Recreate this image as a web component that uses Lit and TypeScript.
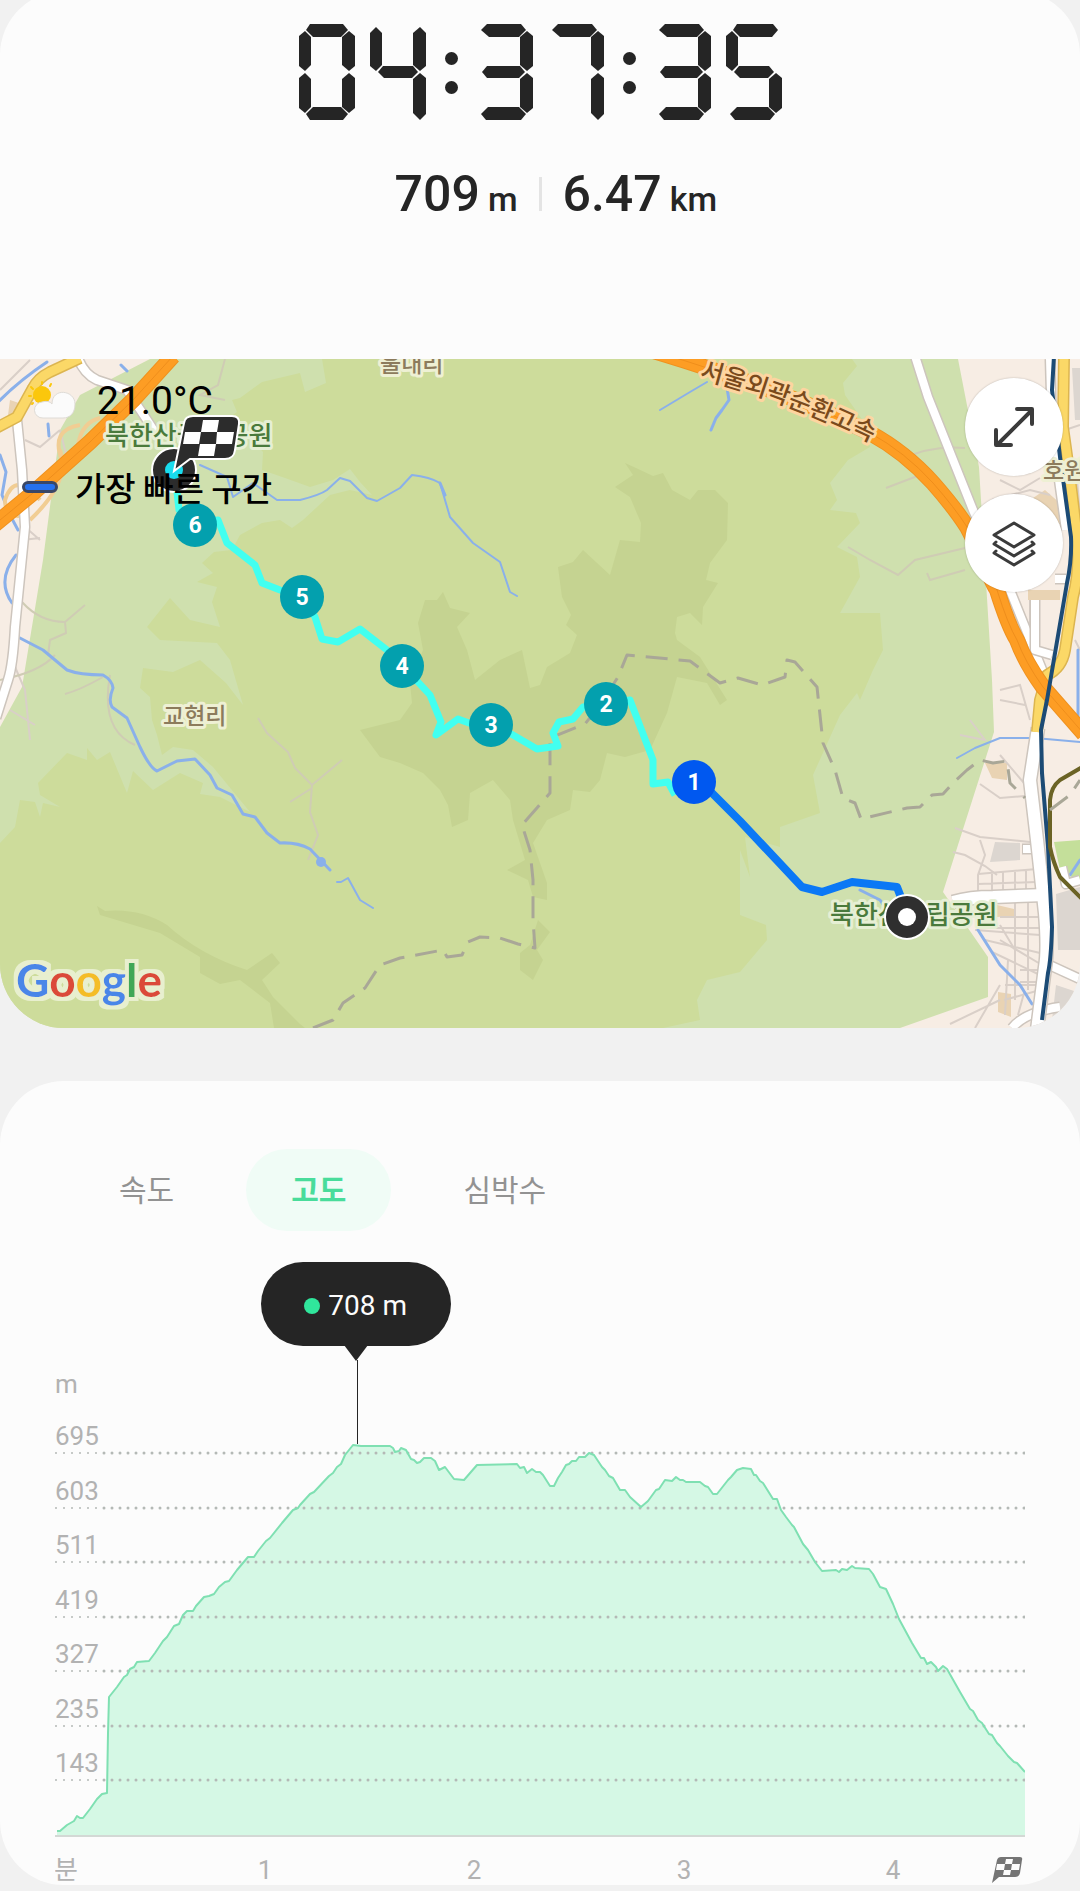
import { LitElement, html, svg, css } from "lit";
import { customElement, property, state } from "lit/decorators.js";
import { classMap } from "lit/directives/class-map.js";

/* Bars of one clock digit in a 56 x 96 cell. Capitals are the regular bars,
   the suffixed ones have free ends that are drawn sharper. */
const BARS: Record<string, string> = {
  a: "7,6 11,0 44,0 49,6 42,13 14,13",
  aLeft: "4,6 10,0 44,0 49,6 42,13 12,13",
  aRight: "7,6 11,0 47,0 52,6 46,13 14,13",
  b: "50,7 56,12 56,42 50,47 43,41 43,13",
  bTop: "50,3 56,9 56,42 50,47 43,41 43,9",
  c: "50,49 56,54 56,84 50,89 43,83 43,55",
  cEnd: "50,49 56,54 56,90 50,96 43,89 43,55",
  d: "7,90 14,83 42,83 49,90 44,96 11,96",
  dLeft: "4,90 11,83 42,83 49,90 44,96 9,96",
  e: "6,49 12,55 12,83 6,89 0,84 0,54",
  f: "6,7 12,13 12,41 6,47 0,42 0,12",
  fTop: "6,3 12,9 12,41 6,47 0,42 0,9",
  g: "8,48 13,42 43,42 48,48 42,54 14,54",
  gLeft: "5,48 10,42 43,42 48,48 42,54 10,54",
};

const DIGITS: Record<string, string[]> = {
  "0": ["a", "b", "c", "d", "e", "f"],
  "3": ["aLeft", "b", "gLeft", "c", "dLeft"],
  "4": ["fTop", "bTop", "g", "cEnd"],
  "5": ["aRight", "f", "g", "c", "dLeft"],
  "7": ["aLeft", "b", "cEnd"],
};

@customElement("segment-clock")
class SegmentClock extends LitElement {
  @property() value = "";

  static styles = css`
    :host { display: block; }
    .clock { display: flex; justify-content: center; align-items: center; gap: 19px; }
    .pair { display: flex; gap: 15px; }
    .digit { width: 56px; height: 96px; fill: #252525; display: block; }
    .colon { display: flex; flex-direction: column; gap: 16px; padding-top: 2px; }
    .dot { width: 13px; height: 13px; border-radius: 50%; background: #252525; }
  `;

  render() {
    const pairs = this.value.split(":");
    return html`<div class="clock" role="img" aria-label=${this.value}>
      ${pairs.map(
        (pair, i) => html`
          ${i > 0 ? html`<div class="colon"><span class="dot"></span><span class="dot"></span></div>` : ""}
          <div class="pair">
            ${[...pair].map(
              (n) => html`<svg class="digit" viewBox="0 0 56 96" aria-hidden="true">
                ${DIGITS[n].map((bar) => svg`<polygon points=${BARS[bar]}></polygon>`)}
              </svg>`
            )}
          </div>
        `
      )}
    </div>`;
  }
}

const MARKS = [
  { n: 6, x: 195, y: 525 },
  { n: 5, x: 302, y: 597 },
  { n: 4, x: 402, y: 666 },
  { n: 3, x: 491, y: 725 },
  { n: 2, x: 606, y: 704 },
  { n: 1, x: 694, y: 782 },
];

@customElement("route-map")
class RouteMap extends LitElement {
  static styles = css`
    :host { display: block; }
    .map { position: relative; overflow: hidden; border-radius: 0 0 64px 64px; background: #f7ede4; }
    .canvas { display: block; width: 100%; height: auto; font-family: Roboto, "Noto Sans CJK KR", sans-serif; }
    .town { fill: none; stroke: #d9cfc8; stroke-width: 2; }
    .trail { fill: none; stroke: #cfccb4; stroke-width: 2; }
    .stream { fill: none; stroke: #8ab0ea; stroke-width: 3; stroke-linejoin: round; stroke-linecap: round; }
    .thin { stroke-width: 2; }
    .case { fill: none; stroke: #cdc5bd; stroke-width: 11; stroke-linejoin: round; }
    .road { fill: none; stroke: #fff; stroke-width: 8; stroke-linejoin: round; }
    .wide-case { stroke-width: 15; }
    .wide { stroke-width: 12; }
    .yellow-case { fill: none; stroke: #dcb550; stroke-width: 12; stroke-linejoin: round; }
    .yellow { fill: none; stroke: #fbd867; stroke-width: 9; stroke-linejoin: round; }
    .ramp { fill: none; stroke: #f1cd93; stroke-width: 4; }
    .highway-case { fill: none; stroke: #ef921f; stroke-width: 16; stroke-linejoin: round; }
    .highway { fill: none; stroke: #fd9d24; stroke-width: 14; stroke-linejoin: round; }
    .median { fill: none; stroke: #ef8e1c; stroke-width: 1; }
    .rail { fill: none; stroke: #1c4b75; stroke-width: 4; stroke-linejoin: round; }
    .olive { fill: none; stroke: #6b6325; stroke-width: 4; stroke-linejoin: round; }
    .border { fill: none; stroke: #a9a797; stroke-width: 3; stroke-dasharray: 22 11; stroke-linejoin: round; }
    .label { font-family: "Noto Sans CJK KR", sans-serif; font-weight: 500; paint-order: stroke; stroke-linejoin: round; stroke-width: 6; }
    .park { font-size: 26px; fill: #4a7a3c; stroke: #e6efd4; }
    .place { font-size: 23px; fill: #8c7b5c; stroke: #eef0d4; }
    .highway-name { font-size: 25px; fill: #7a4a1c; stroke: #fdd5a0; }
    .walk { fill: none; stroke: #42fff0; stroke-width: 7; stroke-linejoin: round; }
    .fast { fill: none; stroke: #0b78f5; stroke-width: 8; stroke-linejoin: round; }
    .mark { fill: #03a0ae; }
    .mark-fast { fill: #0058f0; }
    .mark-text { fill: #fff; font-size: 23px; font-weight: 700; text-anchor: middle; }
    .google { font-family: Lato, sans-serif; font-size: 46px; font-weight: 700; filter: url(#halo); }
    .weather { position: absolute; left: 28px; top: 20px; display: flex; align-items: center; gap: 19px; font: 400 39px/44px Roboto, sans-serif; color: #000; }
    .weather-icon { width: 50px; height: 44px; }
    .legend { position: absolute; left: 22px; top: 106px; display: flex; align-items: center; gap: 17px; font: 500 33px/44px "Noto Sans CJK KR", sans-serif; color: #000; }
    .swatch { width: 36px; height: 12px; box-sizing: border-box; border: 3px solid #3a4766; border-radius: 6px; background: #2671ee; }
    .actions { position: absolute; right: 17px; top: 19px; display: flex; flex-direction: column; gap: 18px; }
    .action { width: 98px; height: 98px; padding: 0; border: 0; border-radius: 50%; background: #fff; display: grid; place-items: center; box-shadow: 0 0 2px rgba(0, 0, 0, 0.25); cursor: pointer; }
    .action-icon { width: 48px; height: 48px; fill: none; stroke: #3b3b3b; stroke-width: 4; stroke-linecap: round; stroke-linejoin: round; }
    .layers { stroke-width: 3; }
  `;

  render() {
    const left = "M173,356 L133,400 L90,442 L33,493 L-6,525";
    const right = "M650,350 Q790,392 870,433 Q905,452 933,483 Q955,508 967,527 C985,560 990,580 997,590 Q1008,625 1017,640 Q1025,662 1043,687 L1084,734";
    const yellowR = "M1064,356 L1063,427 Q1072,490 1077,537 Q1080,570 1073,597 L1065,650 Q1062,668 1047,675 L1040,700 L1037,732";
    const yellowL = "M-4,428 L17,417 L33,388 Q38,378 50,372 L80,358";
    const whiteR = "M915,356 L928,397 L973,510 L1010,590 L1043,672";
    const main = "M1038,728 L1030,780 L1037,840 L1045,913 Q1048,950 1045,967 L1037,1030";
    const west = "M17,420 L22,470 L25,527 L15,627 Q13,665 8,680 L-4,718";
    const cross = "M953,902 Q970,897 993,897 L1045,895";
    const north = "M78,358 Q84,374 97,380 L127,390 L147,420 L160,440";
    return html`<section class="map" aria-label="북한산국립공원">
      <svg class="canvas" viewBox="0 359 1080 669" aria-hidden="true">
        <defs>
          <filter id="halo" x="-10%" y="-20%" width="120%" height="140%">
            <feMorphology in="SourceAlpha" operator="dilate" radius="4" result="grown"></feMorphology>
            <feFlood flood-color="#e8efcf"></feFlood>
            <feComposite in2="grown" operator="in" result="rim"></feComposite>
            <feMerge><feMergeNode in="rim"></feMergeNode><feMergeNode in="SourceGraphic"></feMergeNode></feMerge>
          </filter>
        </defs>
        <path fill="#cfe0ae" d="M150,359 L80,395 L60,430 L43,560 L22,687 L0,727 V1028 H900 L988,997 V957 L943,892 L994,732 L992,680 L979,467 L958,359Z"></path>
        <path fill="#cddc9b" d="M322,359 L326,383 L305,392 L300,373 L262,382 L240,398 L232,400 L237,412 L230,417 L247,425 L257,420 L252,440 L263,452 L262,470 L285,478 L310,487 L333,480 L350,469 L360,482 L372,495 L350,490 L330,495 L303,520 L292,528 L280,520 L262,523 L240,535 L232,550 L214,552 L202,563 L213,573 L197,582 L217,587 L212,602 L220,627 L190,620 L170,598 L147,627 L160,640 L217,643 L230,660 L243,705 L226,683 L200,660 L173,672 L143,668 L140,688 L150,697 L152,720 L157,735 L162,755 L173,747 L193,750 L213,767 L250,812 L220,797 L200,794 L203,783 L180,773 L153,790 L133,771 L127,793 L110,752 L97,760 L87,748 L87,760 L67,753 L38,783 L40,795 L60,807 L43,803 L40,817 L35,802 L20,800 L15,827 L0,843 V1028 H663 L700,1020 L697,1000 L707,980 L740,972 L767,940 L766,925 L740,915 V880 L740,850 L750,877 L745,837 L780,847 L780,827 L820,813 L813,775 L840,715 L857,693 L860,700 L873,670 L883,650 L880,613 L840,613 L860,577 L857,557 L837,547 L860,523 L856,513 L830,510 L837,500 L830,483 L848,460 L870,447 L866,425 L845,395 L843,383 L857,366 L852,359Z"></path>
        <path fill="#c5d391" d="M625,463 L636,468 L653,476 L663,473 L672,490 L690,500 L698,490 L715,490 L728,503 L727,540 L710,563 L706,580 L718,583 L703,607 L702,625 L690,613 L677,617 L675,633 L677,640 L700,657 L727,700 L720,705 L707,683 L677,677 L667,713 L650,750 L625,757 L607,753 L600,780 L590,792 L573,790 L570,810 L547,820 L533,843 L547,883 L547,900 L533,897 L528,880 L507,870 L525,860 L513,820 L510,800 L493,780 L470,793 L468,820 L452,827 L448,805 L440,790 L423,773 L400,763 L380,757 L360,730 L380,725 L400,720 L412,703 L410,683 L423,650 L418,623 L425,600 L437,600 L443,592 L450,608 L470,613 L457,627 L467,650 L475,680 L500,660 L522,650 L530,688 L540,685 L547,667 L570,653 L577,635 L566,625 L571,615 L562,597 L558,567 L573,562 L583,550 L610,575 L620,540 L640,542 L641,523 L630,497 L615,487 L633,475Z"></path>
        <path fill="#c5d391" d="M97,906 L105,911 Q140,908 167,925 Q200,955 247,970 L272,953 L280,963 L262,980 L273,997 L300,1024 L305,1028 H274 L270,1003 L240,980 L220,984 L200,973 V957 L160,933 L100,915Z M538,920 L550,932 L537,950 L543,960 L533,980 L520,970 V953 L530,945Z"></path>
        <path fill="#e9d3b3" d="M1030,500 L1045,490 L1062,505 L1061,525 L1045,515 L1030,512Z M1028,590 H1060 V600 H1028Z M985,763 L1007,763 V780 L992,778Z M997,905 L1014,909 V916 L997,917Z M998,992 L1011,994 V1017 L998,1012Z M10,400 L25,405 L18,420 L8,415Z"></path>
        <path fill="#dcd6d0" d="M1056,894 L1080,887 V950 H1058Z M1056,985 L1080,993 V1020 H1052Z M1072,368 H1080 V420 H1075Z M995,842 L1020,843 V860 L990,862Z"></path>
        <path fill="#c4df9a" d="M1054,842 L1080,840 V882 L1060,870Z"></path>
        <path class="town" d="M955,828 L980,837 L1030,842 M953,852 L965,855 L985,866 L997,875 M980,840 L985,855 L978,875 V893 M978,874 L1037,869 M978,884 L1036,882 M992,874 V892 M1003,872 V892 M1015,872 V892 M1026,871 V892 M1000,917 H1040 M995,928 H1040 M985,940 L1040,953 M975,930 L1040,935 M1015,903 V1000 M1028,903 V990 M992,952 L1040,975 M1000,940 L1042,965 M1004,1000 L1040,990 M1008,960 L1005,1015 M1020,970 H1040 M1020,982 H1038 M1024,993 L1018,1015 M975,1028 L1000,985 M1005,985 H1040 M1000,925 L1015,950 M950,1024 L1000,1000 M980,784 L1000,798 L1037,795 M1000,755 L1030,790 M992,500 L1030,490 L1050,495 M1000,480 L1020,490 L1040,478 M1030,600 V650 L1052,657 M1065,430 L1080,425 M1077,480 L1080,515 M1075,640 L1080,650 M1000,690 L1020,685 L1030,720 M1000,700 L1025,705 M970,720 L985,740 L960,735"></path>
        <path class="town" d="M0,390 L30,360 M25,440 L40,447 L60,430 M25,527 L40,540 M12,660 L25,690 L30,740 M22,540 L40,538 M60,430 L70,470 M10,710 L35,725"></path>
        <path class="trail" d="M22,602 Q40,622 65,622 L85,605 M65,622 L66,633 L50,640 L48,655 M0,680 Q40,672 55,655 M65,694 Q80,690 103,677 M110,675 Q100,730 135,745 M258,718 L267,733 L288,752 L295,768 L312,785 L310,812 L318,835 L308,860 M312,785 L342,760 M290,802 L312,788 M848,547 L870,560 L898,575 L915,560 L965,548 M927,573 L930,580 L965,570 M225,359 L218,385 L200,395 L225,400 M886,488 L920,475 M900,460 Q930,445 965,448"></path>
        <path class="stream thin" d="M200,465 L227,477 L233,497 L253,483 L277,500 L300,500 Q320,495 327,490 L340,478 L350,481 L367,498 L377,501 L400,488 L412,475 Q430,477 440,483 L450,517 L473,543 L500,562 L510,592 L517,596 M660,410 L690,392 L707,382 M337,882 L341,882 L348,878 L360,900 L373,908 M957,758 L975,748 L1000,738 L1035,738 L1080,742"></path>
        <path class="stream" d="M18,637 L43,650 L67,670 Q80,675 103,675 Q112,680 113,688 Q108,700 112,707 L127,718 L140,747 Q150,768 157,771 L177,761 L195,759 L210,775 L217,788 L232,795 L243,814 L255,817 L267,833 L280,843 Q297,842 310,849 L330,870 M727,388 L729,400 L722,410 L716,418 L711,430 M440,483 L445,495 M860,890 L880,900 L890,915 M978,930 L1000,965 L1020,985 L1032,1004"></path>
        <circle cx="321" cy="862" r="5" fill="#8ab0ea"></circle>
        <path class="stream" d="M-2,402 Q20,380 47,362 M0,455 L6,472 L2,495 L10,515 L18,530 M16,555 Q-4,580 12,603 M121,365 L127,371 M48,424 L49,436 M1078,650 V725 M1070,875 L1080,860"></path>

        <path class="ramp" d="M80,425 Q50,430 62,460 Q75,465 78,445 Q82,422 100,418 M40,500 Q15,470 5,500 Q5,520 25,515 M60,450 Q72,480 30,520"></path>
        <path class="case" d="${north}"></path><path class="road" d="${north}"></path>
        <path class="case" d="${west}"></path><path class="road" d="${west}"></path>
        <path class="yellow-case" d="${yellowL}"></path><path class="yellow" d="${yellowL}"></path>
        <path class="case" d="${whiteR}"></path><path class="road" d="${whiteR}"></path>
        <path class="case" d="M1022,849 H1037 M1045,963 L1082,980 M1012,1028 Q1025,1012 1060,1007 M1050,359 L1052,430 L1066,530 M1055,579 H1066 M1052,655 L1035,650 V600 M1062,867 L1066,884 L1080,880"></path>
        <path class="road" d="M1023,849 H1040 M1045,963 L1082,980 M1012,1028 Q1025,1012 1060,1007 M1050,359 L1052,430 L1066,530 M1055,579 H1066 M1052,655 L1035,650 V600 M1062,867 L1066,884 L1080,880"></path>
        <path class="case wide-case" d="${main}"></path><path class="case wide-case" d="${cross}"></path>
        <path class="road wide" d="${main}"></path><path class="road wide" d="${cross}"></path>
        <path class="yellow-case" d="${yellowR}"></path><path class="yellow" d="${yellowR}"></path>
        <path class="highway-case" d="${left}"></path><path class="highway" d="${left}"></path><path class="median" d="${left}"></path>
        <path class="highway-case" d="${right}"></path><path class="highway" d="${right}"></path><path class="median" d="${right}"></path>
        <path class="rail" d="M1054,356 L1052,390 L1060,457 L1071,537 Q1072,560 1067,583 L1047,700 L1041,730 L1042,773 L1048,847 L1052,927 Q1051,960 1048,973 L1042,1020"></path>
        <path class="olive" d="M1084,766 L1060,780 Q1051,787 1050,800 V847 Q1053,862 1060,877 L1084,901"></path>

        <path class="border" d="M313,1028 L333,1020 L343,1003 L365,988 L380,965 L400,958 L443,950 L447,957 L462,955 L468,942 L480,937 L500,938 L518,944 L535,948 L533,920 L533,880 L530,850 L522,825 L550,793 V738 L585,724 L600,705 L618,677 L627,655 L690,661 L720,683 L738,678 L762,685 L785,677 L787,660 L795,662 L817,687 L823,743 L835,770 L843,798 L855,803 L861,819 L907,808 L920,807 L932,795 L943,794 L953,783 L967,770 L980,760 L993,763 L1007,761 L1010,783 L1025,798 M1050,810 L1070,795 L1080,780"></path>

        <text class="label park" x="105" y="445">북한산국립공원</text>
        <text class="label park" x="830" y="924">북한산국립공원</text>
        <text class="label place" x="380" y="372">울내리</text>
        <text class="label place" x="163" y="724">교현리</text>
        <text class="label place" x="1043" y="479">호원동</text>
        <path id="name-line" fill="none" d="M699,378 Q790,402 880,447"></path>
        <text class="label highway-name"><textPath href="#name-line">서울외곽순환고속</textPath></text>

        <circle cx="174" cy="470" r="22" fill="#2c2c2c" stroke="#fff" stroke-width="2"></circle>
        <circle cx="174" cy="470" r="9" fill="#19dced"></circle>
        <path class="walk" d="M177,492 L179,510 L195,525 L218,520 L227,543 L255,565 L262,583 L280,590 L302,597 L315,617 L322,639 L338,642 L360,629 L387,650 L402,666 L418,682 L430,695 L441,722 L436,735 L458,719 L469,723 L491,725 L513,735 L537,749 L558,746 L553,733 L559,722 L573,719 L583,707 L606,704 L630,700 L653,760 V784 L668,782 L675,795"></path>
        <path class="fast" d="M694,775 L740,821 L802,887 L822,892 L852,882 L897,887 L902,900"></path>
        <path d="M174,471 L184,423 Q185,416 193,416 H232 Q240,416 239,424 L235,450 Q234,459 225,459 H190 Z" fill="#2c2c2c" stroke="#fff" stroke-width="2"></path>
        <path d="M203,420 H219 L217,432 H201Z M185,432 H201 L199,444 H183Z M217,432 H234 L232,444 H216Z M200,444 H216 L214,456 H198Z" fill="#fff"></path>
        <circle cx="907" cy="917" r="22" fill="#2f2f2f" stroke="#fff" stroke-width="2"></circle>
        <circle cx="907" cy="917" r="9" fill="#fff"></circle>
        ${MARKS.map(
          (m) => svg`<circle class=${m.n === 1 ? "mark-fast" : "mark"} cx=${m.x} cy=${m.y} r="22"></circle>
            <text class="mark-text" x=${m.x} y=${m.y + 8}>${m.n}</text>`
        )}
        <text class="google" x="16" y="997"><tspan fill="#4a86e8">G</tspan><tspan fill="#db4a39">o</tspan><tspan fill="#f4bd27">o</tspan><tspan fill="#4a86e8">g</tspan><tspan fill="#3fa756">l</tspan><tspan fill="#db4a39">e</tspan></text>
      </svg>

      <div class="weather">
        <svg class="weather-icon" viewBox="0 0 50 44" aria-hidden="true">
          <circle cx="14" cy="16" r="9" fill="#fbc70c"></circle>
          <path d="M14,3 V5 M3,8 L5,10 M23,5 L22,7 M1,17 H3 M4,25 L5,24" stroke="#fbc70c" stroke-width="2" stroke-linecap="round"></path>
          <path d="M15,39 A8,8 0 0 1 14,23 Q21,21 24,25 C24,8 47,11 47,25 C47,34 42,39 35,39Z" fill="#fbfbfb" stroke="#dedbd6" stroke-width="1"></path>
        </svg>
        <span>21.0°C</span>
      </div>
      <div class="legend"><span class="swatch"></span><span>가장 빠른 구간</span></div>
      <div class="actions">
        <button class="action" aria-label="지도 확대">
          <svg class="action-icon" viewBox="0 0 48 48"><path d="M7,42 L42,7 M27,6 H42 V21 M6,27 V42 H21"></path></svg>
        </button>
        <button class="action" aria-label="지도 레이어">
          <svg class="action-icon layers" viewBox="0 0 48 48"><path d="M24,4 L44,16 L24,28 L4,16Z M6,23 L4,25 L24,37 L44,25 L42,23 M6,32 L4,34 L24,46 L44,34 L42,32"></path></svg>
        </button>
      </div>
    </section>`;
  }
}

const TABS = ["속도", "고도", "심박수"];

const PROFILE =
  "2,471 5,471 12,465 19,461 22,456 25,458 28,458 35,449 42,439 47,434 52,433 53,373 54,337 62,327 69,317 72,315 75,309 79,307 82,302 94,301 100,293 104,287 108,281 112,277 119,266 124,264 128,255 132,251 138,251 141,246 149,237 154,236 159,234 164,227 170,222 174,221 182,210 193,197 199,197 203,191 211,181 215,178 227,163 238,150 243,148 245,145 255,134 259,132 274,116 278,113 282,107 286,104 290,95 298,85 306,86 335,86 338,88 340,92 344,91 346,88 351,90 356,99 359,100 362,103 365,102 369,98 376,98 380,101 384,110 390,107 399,119 409,120 422,105 462,104 465,108 469,107 472,113 477,109 481,112 485,112 488,115 495,126 499,126 503,118 507,112 511,105 514,104 517,101 521,101 524,97 530,97 534,93 539,95 547,107 550,110 554,116 558,118 565,130 570,130 575,137 586,147 593,141 601,130 604,129 610,120 617,121 621,117 625,120 628,120 631,122 645,122 650,126 653,127 658,134 662,134 673,120 676,117 682,110 688,108 696,109 699,115 701,115 705,121 708,123 718,139 722,139 726,150 731,157 737,165 739,167 748,184 753,190 760,202 767,211 781,210 784,212 787,209 792,210 797,206 800,208 814,209 818,214 825,227 831,229 838,244 844,259 857,283 866,298 869,298 872,304 876,302 881,307 883,311 888,306 892,309 905,332 915,349 918,351 923,360 927,363 934,374 937,375 942,383 945,386 953,396 959,402 962,403 970,412";

const LEVELS = [
  { label: "695", y: 93 },
  { label: "603", y: 148 },
  { label: "511", y: 202 },
  { label: "419", y: 257 },
  { label: "327", y: 311 },
  { label: "235", y: 366 },
  { label: "143", y: 420 },
];
const HOURS = [
  { label: "1", x: 210 },
  { label: "2", x: 419 },
  { label: "3", x: 629 },
  { label: "4", x: 838 },
];

@customElement("workout-chart")
class WorkoutChart extends LitElement {
  @state() private tab = "고도";

  static styles = css`
    :host { display: block; }
    .card { background: #fcfcfc; border-radius: 64px; padding: 68px 55px 0; }
    .tabs { display: flex; gap: 27px; padding-left: 19px; }
    .tab { height: 82px; padding: 0 45px 4px; border: 0; border-radius: 41px; background: none; color: #929292; font: 400 30px/40px "Noto Sans CJK KR", sans-serif; cursor: pointer; }
    .tab.active { background: #f0fcf6; color: #49dc9b; font-weight: 700; }
    .plot { position: relative; padding-top: 129px; }
    .graph { display: block; width: 100%; height: auto; font: 400 26px Roboto, "Noto Sans CJK KR", sans-serif; fill: #b2b2b2; }
    .grid { stroke: #b4b9b6; stroke-width: 3; stroke-linecap: round; stroke-dasharray: 0 8; }
    .faint { stroke-width: 2; }
    .area { fill: #d5f8e5; }
    .line { fill: none; stroke: #7fe0b2; stroke-width: 2; stroke-linejoin: round; }
    .axis { stroke: #d3d9d5; stroke-width: 2; }
    .cursor { stroke: #252525; stroke-width: 1; shape-rendering: crispEdges; }
    .hour { text-anchor: middle; }
    .tip { position: absolute; left: 31%; top: 31px; transform: translateX(-50%); height: 84px; width: 190px; box-sizing: border-box; padding-top: 3px; border-radius: 42px; background: #252525; color: #fcfcfc; display: flex; align-items: center; justify-content: center; gap: 8px; font: 400 28px/36px Roboto, sans-serif; }
    .tip::after { content: ""; position: absolute; top: 83px; left: 83px; border: 12px solid transparent; border-top: 16px solid #252525; border-bottom: 0; }
    .tip-dot { width: 16px; height: 16px; border-radius: 50%; background: #30e69c; }
  `;

  render() {
    return html`<section class="card">
      <div class="tabs" role="tablist">
        ${TABS.map(
          (t) => html`<button
            class=${classMap({ tab: true, active: t === this.tab })}
            role="tab"
            aria-selected=${t === this.tab ? "true" : "false"}
            @click=${() => (this.tab = t)}
          >${t}</button>`
        )}
      </div>
      <div class="plot">
        <svg class="graph" viewBox="0 0 970 525" role="img" aria-label="고도 m">
          <polygon class="area" points="2,476 ${PROFILE} 970,476"></polygon>
          ${LEVELS.map(
            (l) => svg`<line class="grid faint" x1="1" x2="42" y1=${l.y} y2=${l.y}></line>
              <line class="grid" x1="49" x2="970" y1=${l.y} y2=${l.y}></line>
              <text x="0" y=${l.y - 8}>${l.label}</text>`
          )}
          <polyline class="line" points=${PROFILE}></polyline>
          <line class="axis" x1="0" x2="970" y1="476" y2="476"></line>
          <path class="cursor" d="M302,0 V84"></path>
          <text x="0" y="33">m</text>
          <text x="-1" y="519">분</text>
          ${HOURS.map((h) => svg`<text class="hour" x=${h.x} y="519">${h.label}</text>`)}
          <path d="M937,523 L942,500 Q943,497 946,497 H965 Q968,497 967,500 L965,513 Q964,517 960,517 H944Z" fill="#757575"></path>
          <path d="M951,499 H958 L957,504 H950Z M942,504 H950 L949,510 H941Z M957,504 H965 L964,510 H956Z M949,510 H956 L955,515 H948Z" fill="#fcfcfc"></path>
        </svg>
        <div class="tip"><span class="tip-dot"></span><span>708 m</span></div>
      </div>
    </section>`;
  }
}

@customElement("app-root")
class AppRoot extends LitElement {
  static styles = css`
    :host { display: block; background: #f1f1f1; min-height: 100vh; overflow: hidden; }
    .summary { margin-top: -9px; padding: 33px 0 129px; background: #fcfcfc; border-radius: 64px 64px 0 0; }
    .stats { display: grid; grid-template-columns: 1fr 3px 1fr; align-items: baseline; column-gap: 21px; margin-top: 38px; color: #252525; font: 500 50px/72px Roboto, sans-serif; }
    .stat { display: flex; align-items: baseline; gap: 8px; }
    .climb { justify-content: flex-end; }
    .unit { font-size: 34px; line-height: 40px; }
    .divider { align-self: center; width: 3px; height: 34px; background: #e4e4e4; }
    .chart { display: block; margin-top: 53px; margin-bottom: 6px; }
  `;

  render() {
    return html`<main>
      <section class="summary">
        <segment-clock value="04:37:35"></segment-clock>
        <div class="stats">
          <div class="stat climb"><span>709</span><span class="unit">m</span></div>
          <span class="divider"></span>
          <div class="stat"><span>6.47</span><span class="unit">km</span></div>
        </div>
      </section>
      <route-map></route-map>
      <workout-chart class="chart"></workout-chart>
    </main>`;
  }
}
